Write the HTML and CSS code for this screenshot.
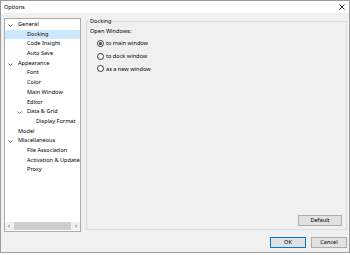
FILE: index.html
```html
<!DOCTYPE html>
<html lang="en">
<head>
    <meta charset="UTF-8">
    <title>Options</title>
    <link rel="stylesheet" href="styles.css">
</head>
<body>
    <div class="window">
        <div class="titlebar">
            <span class="title">Options</span>
            <svg class="close" width="6" height="6" viewBox="0 0 6 6">
                <path d="M0.5 0.5 L5.5 5.5 M5.5 0.5 L0.5 5.5" stroke="#333" stroke-width="1"/>
            </svg>
        </div>

        <div class="content">
            <div class="tree">
                <ul class="items">
                    <li class="node lvl0"><svg class="arrow" width="5" height="3" viewBox="0 0 5 3"><path d="M0.5 0.5 L2.5 2.5 L4.5 0.5" fill="none" stroke="#555" stroke-width="0.8"/></svg>General</li>
                    <li class="node lvl1 selected">Docking</li>
                    <li class="node lvl1">Code Insight</li>
                    <li class="node lvl1">Auto Save</li>
                    <li class="node lvl0"><svg class="arrow" width="5" height="3" viewBox="0 0 5 3"><path d="M0.5 0.5 L2.5 2.5 L4.5 0.5" fill="none" stroke="#555" stroke-width="0.8"/></svg>Appearance</li>
                    <li class="node lvl1">Font</li>
                    <li class="node lvl1">Color</li>
                    <li class="node lvl1">Main Window</li>
                    <li class="node lvl1">Editor</li>
                    <li class="node lvl1"><svg class="arrow" width="5" height="3" viewBox="0 0 5 3"><path d="M0.5 0.5 L2.5 2.5 L4.5 0.5" fill="none" stroke="#555" stroke-width="0.8"/></svg>Data &amp; Grid</li>
                    <li class="node lvl2">Display Format</li>
                    <li class="node lvl0">Model</li>
                    <li class="node lvl0"><svg class="arrow" width="5" height="3" viewBox="0 0 5 3"><path d="M0.5 0.5 L2.5 2.5 L4.5 0.5" fill="none" stroke="#555" stroke-width="0.8"/></svg>Miscellaneous</li>
                    <li class="node lvl1">File Association</li>
                    <li class="node lvl1">Activation &amp; Updates</li>
                    <li class="node lvl1">Proxy</li>
                </ul>
                <div class="hscroll">
                    <span class="sarrow">&#8249;</span>
                    <span class="thumb"></span>
                    <span class="sarrow">&#8250;</span>
                </div>
            </div>

            <fieldset class="group">
                <legend>Docking</legend>
                <div class="label">Open Windows:</div>
                <div class="radios">
                    <div class="radio-row"><span class="radio checked"></span>to main window</div>
                    <div class="radio-row"><span class="radio"></span>to dock window</div>
                    <div class="radio-row"><span class="radio"></span>as a new window</div>
                </div>
                <div class="group-footer">
                    <button class="btn default">Default</button>
                </div>
            </fieldset>
        </div>

        <div class="footer">
            <button class="btn ok">OK</button>
            <button class="btn">Cancel</button>
        </div>
    </div>
</body>
</html>
```

FILE: styles.css
```css
body {
    margin: 0;
    background-color: #ffffff;
    font-family: 'Noto Sans', sans-serif;
    font-size: 5.6px;
    color: #000000;
}
.window {
    width: 350px;
    height: 253px;
    box-sizing: border-box;
    border: 1px solid #9c9c9c;
    background-color: #f0f0f0;
    display: flex;
    flex-direction: column;
}
.titlebar {
    height: 12px;
    background-color: #ffffff;
    display: flex;
    align-items: center;
    justify-content: space-between;
    padding: 0 4px 0 3px;
}
.title {
    line-height: 12px;
}
.close {
    display: block;
}
.content {
    display: flex;
    gap: 5px;
    padding: 5px 2px 0 3px;
    height: 214px;
}
.tree {
    width: 77px;
    box-sizing: border-box;
    border: 1px solid #ababab;
    background-color: #ffffff;
    display: flex;
    flex-direction: column;
}
.items {
    list-style: none;
    margin: 0;
    padding: 1px 0 0 0;
    flex: 1;
    overflow: hidden;
}
.node {
    height: 9.7px;
    line-height: 9.7px;
    white-space: nowrap;
    position: relative;
}
.lvl0 { padding-left: 13px; }
.lvl1 { padding-left: 22px; }
.lvl2 { padding-left: 31px; }
.selected {
    background-color: #cce8ff;
}
.arrow {
    position: absolute;
    top: 4px;
    display: block;
}
.lvl0 .arrow { left: 3px; }
.lvl1 .arrow { left: 12px; }
.hscroll {
    height: 8px;
    background-color: #f0f0f0;
    display: flex;
    align-items: center;
    gap: 2px;
    padding: 0 1px;
    margin-bottom: 1px;
}
.sarrow {
    width: 6px;
    text-align: center;
    font-size: 7px;
    line-height: 8px;
    color: #606060;
}
.thumb {
    flex: 1;
    height: 8px;
    background-color: #cdcdcd;
}
.group {
    flex: 1;
    margin: 0 0 2px 0;
    padding: 0 4px 3px 3px;
    border: 1px solid #dcdcdc;
    display: flex;
    flex-direction: column;
}
.group legend {
    padding: 0 1px;
    margin-left: -1px;
    line-height: 7px;
}
.label {
    line-height: 10px;
    margin-top: 1px;
}
.radios {
    padding-left: 7px;
    margin-top: 1px;
    display: flex;
    flex-direction: column;
}
.radio-row {
    height: 12.7px;
    display: flex;
    align-items: center;
    gap: 2px;
}
.radio {
    width: 5px;
    height: 5px;
    border: 1px solid #333333;
    border-radius: 50%;
    background-color: #ffffff;
    position: relative;
}
.radio.checked::after {
    content: '';
    position: absolute;
    left: 1px;
    top: 1px;
    width: 3px;
    height: 3px;
    border-radius: 50%;
    background-color: #333333;
}
.group-footer {
    margin-top: auto;
    display: flex;
    justify-content: flex-end;
}
.btn {
    font-family: 'Noto Sans', sans-serif;
    font-size: 5.6px;
    color: #000000;
    background-color: #e1e1e1;
    border: 1px solid #adadad;
    height: 11px;
    width: 36px;
    padding: 0;
    line-height: 9px;
}
.btn.default {
    width: 44px;
}
.btn.ok {
    border-color: #0078d7;
}
.footer {
    flex: 1;
    display: flex;
    justify-content: flex-end;
    align-items: center;
    gap: 5px;
    padding: 0 2px 0 0;
}
```
